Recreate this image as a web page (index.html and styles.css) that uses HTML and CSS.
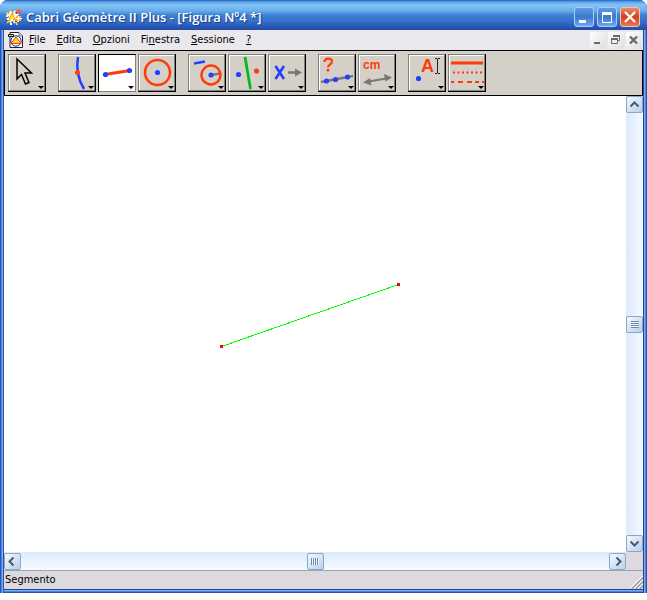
FILE: index.html
```html
<!DOCTYPE html>
<html lang="it">
<head>
<meta charset="utf-8">
<title>Cabri Géomètre II Plus</title>
<link rel="stylesheet" href="styles.css">
</head>
<body>
<div class="window">
  <header class="titlebar">
    <svg class="app-icon" width="17" height="18" viewBox="0 0 17 18" aria-hidden="true">
      <circle cx="7" cy="9" r="5.500" fill="#fff" stroke="#fff" stroke-width="2"/>
      <circle cx="7" cy="9" r="5.500" fill="none" stroke="#2433c8" stroke-width="2" stroke-dasharray="2 2"/>
      <path d="M3 12L6 5L10 12Z" fill="#ffe800" stroke="#ff8a20"/>
      <path d="M0 5l3 1M1 15l3-3M10 14l1 3M7 3l1 3" stroke="#ffe800" stroke-width="1.500" fill="none"/>
      <path d="M3 5h2M5 12h2M8 8h2M11 13h2M0 8h2M1 11h2M4 16h2" stroke="#fff" stroke-width="2"/>
      <path d="M13 1v5M10 3.500h6" stroke="#ff5a38" stroke-width="2"/>
      <path d="M10 8h5v5h-5z" fill="#ffb040"/><path d="M10 10.500h6M12.500 8v6" stroke="#fff"/>
    </svg>
    <h1 class="title">Cabri Géomètre II Plus - [Figura Nº4 *]</h1>
    <div class="captions">
      <button class="caption" aria-label="Riduci a icona"><svg width="18" height="18" viewBox="0 0 18 18"><path d="M4 13.500h7" stroke="#fff" stroke-width="3"/></svg></button>
      <button class="caption" aria-label="Ingrandisci"><svg width="18" height="18" viewBox="0 0 18 18"><path d="M4.500 4v10.500h9V4" fill="none" stroke="#fff"/><path d="M4 5.500h10" stroke="#fff" stroke-width="3"/></svg></button>
      <button class="caption close" aria-label="Chiudi"><svg width="18" height="18" viewBox="0 0 18 18"><path d="M4 4l10 10M14 4l-10 10" stroke="#fff" stroke-width="2.400"/></svg></button>
    </div>
  </header>
  <nav class="menubar">
    <svg class="doc-icon" width="16" height="16" viewBox="0 0 16 16" aria-hidden="true">
      <path d="M2 .5h9l3.500 3.500v11.500H2Z" fill="#fff" stroke="#222"/><path d="M11 .5V4h3.500" fill="#ddd" stroke="#777"/>
      <circle cx="8" cy="9" r="5.200" fill="#fff" stroke="#2020d8"/>
      <path d="M3 11.500L8 5L13 11.500Z" fill="#ffe800" stroke="#f03018"/>
      <path d="M.5 2.500h5v2h-5z" fill="#ffe800" stroke="#111"/>
    </svg>
    <button class="menu"><u>F</u>ile</button>
    <button class="menu"><u>E</u>dita</button>
    <button class="menu"><u>O</u>pzioni</button>
    <button class="menu">Fi<u>n</u>estra</button>
    <button class="menu"><u>S</u>essione</button>
    <button class="menu"><u>?</u></button>
    <div class="doc-buttons">
      <button aria-label="Riduci figura"><svg width="16" height="16" viewBox="0 0 16 16"><path d="M4 11h6" stroke="#6d6a60" stroke-width="2"/></svg></button>
      <button aria-label="Ripristina figura"><svg width="16" height="16" viewBox="0 0 16 16"><path d="M5.500 5V3.500h6v5H10M3.500 7v4.500h6V7" fill="none" stroke="#6d6a60"/><path d="M3 7h7M5 4h7" stroke="#6d6a60" stroke-width="2"/></svg></button>
      <button aria-label="Chiudi figura"><svg width="16" height="16" viewBox="0 0 16 16"><path d="M4 4.500l7 7M11 4.500l-7 7" stroke="#6d6a60" stroke-width="2.400"/></svg></button>
    </div>
  </nav>
  <div class="toolbar" role="toolbar" aria-label="Strumenti">
    <div class="group">
      <button class="tool" aria-label="Puntatore"><svg width="38" height="38" viewBox="0 0 38 38"><path d="M9 5V25L13.500 20.500L17.500 30L21 28.500L17 19H23.500Z" fill="none" stroke="#000" stroke-width="1.500"/><path class="drop" d="M30 32h6l-3 3z"/></svg></button>
    </div>
    <div class="group">
      <button class="tool" aria-label="Punti"><svg width="38" height="38" viewBox="0 0 38 38"><path d="M20 3C18 14 20 25 26 35" fill="none" stroke="#2440ff" stroke-width="2.500"/><circle cx="19.500" cy="18.500" r="2.500" fill="#ff3c08"/><path class="drop" d="M30 32h6l-3 3z"/></svg></button>
      <button class="tool active" aria-label="Segmento"><svg width="38" height="38" viewBox="0 0 38 38"><path d="M7 20.500L32 16.500" stroke="#ff3c08" stroke-width="3"/><g fill="#2440ff"><circle cx="7.500" cy="20.500" r="2.600"/><circle cx="31.500" cy="16.500" r="2.600"/></g><path class="drop" d="M30 32h6l-3 3z"/></svg></button>
      <button class="tool" aria-label="Circonferenza"><svg width="38" height="38" viewBox="0 0 38 38"><circle cx="19.500" cy="18.500" r="12.500" fill="none" stroke="#ff3c08" stroke-width="2.500"/><circle cx="19.500" cy="18.500" r="2.600" fill="#2440ff"/><path class="drop" d="M30 32h6l-3 3z"/></svg></button>
    </div>
    <div class="group">
      <button class="tool" aria-label="Costruzioni"><svg width="38" height="38" viewBox="0 0 38 38"><path d="M6 9.500L17 7.500" stroke="#2440ff" stroke-width="2.400"/><path d="M23 21L32 19.500" stroke="#777" stroke-width="2.500"/><circle cx="23" cy="21" r="9.500" fill="none" stroke="#ff3c08" stroke-width="2.400"/><circle cx="23" cy="21" r="2.600" fill="#2440ff"/><path class="drop" d="M30 32h6l-3 3z"/></svg></button>
      <button class="tool" aria-label="Trasformazioni"><svg width="38" height="38" viewBox="0 0 38 38"><path d="M17 3L22.500 35" stroke="#08b820" stroke-width="2.800"/><circle cx="10.500" cy="20.500" r="2.600" fill="#2440ff"/><circle cx="28.500" cy="17" r="2.600" fill="#ff3c08"/><path class="drop" d="M30 32h6l-3 3z"/></svg></button>
      <button class="tool" aria-label="Macro"><svg width="38" height="38" viewBox="0 0 38 38"><path d="M7.500 12L16 25M16 12L7.500 25" stroke="#2440ff" stroke-width="2.600"/><path d="M20 18.500h10" stroke="#777" stroke-width="2.500"/><path d="M27 14.500l7 4-7 4z" fill="#777"/><path class="drop" d="M30 32h6l-3 3z"/></svg></button>
    </div>
    <div class="group">
      <button class="tool" aria-label="Proprietà"><svg width="38" height="38" viewBox="0 0 38 38"><path d="M3 28L35 22" stroke="#777" stroke-width="2.500"/><g fill="#2440ff"><circle cx="8.500" cy="27" r="2.600"/><circle cx="17.500" cy="25.500" r="2.600"/><circle cx="29.500" cy="23" r="2.600"/></g><path d="M6.500 8C6.500 3.500 14 3.500 14 7.500C14 10.500 10 10.500 10 13.500" fill="none" stroke="#ff3c08" stroke-width="2.200"/><path d="M8.700 15h2.600v2.500H8.700z" fill="#ff3c08"/><path class="drop" d="M30 32h6l-3 3z"/></svg></button>
      <button class="tool" aria-label="Misura"><svg width="38" height="38" viewBox="0 0 38 38"><text class="cm" x="5" y="15">cm</text><path d="M8 28L31 24" stroke="#777" stroke-width="2"/><path d="M5 28.500l7-4.500 1.500 7.500zM34 23.500l-8-3.500 1.500 7.500z" fill="#777"/><path class="drop" d="M30 32h6l-3 3z"/></svg></button>
    </div>
    <div class="group">
      <button class="tool" aria-label="Testo e simboli"><svg width="38" height="38" viewBox="0 0 38 38"><text class="letter" x="13" y="18">A</text><path d="M27 4.500h2l.5 1 .5-1h2M29.500 5v14M27 19.500h2l.5-1 .5 1h2" fill="none" stroke="#222"/><circle cx="10.500" cy="24.500" r="2.600" fill="#2440ff"/><path class="drop" d="M30 32h6l-3 3z"/></svg></button>
      <button class="tool" aria-label="Attributi"><svg width="38" height="38" viewBox="0 0 38 38"><g stroke="#ff3c08" stroke-width="2"><path d="M3 9h32" stroke-width="3"/><path d="M5 18.500h31" stroke-dasharray="2 2.500"/><path d="M3 28h3M10 28h5M19 28h5M27 28h4M34 28h2"/></g><path class="drop" d="M30 32h6l-3 3z"/></svg></button>
    </div>
  </div>
  <main class="workspace">
    <div class="canvas">
      <svg class="figure" width="622" height="456" viewBox="0 0 622 456" role="img" aria-label="Segmento" shape-rendering="crispEdges"><path d="M217.500 250.500L394.500 188.500" stroke="#0f0"/><path d="M216 249h3v3h-3zM393 187h3v3h-3z" fill="#f00"/></svg>
    </div>
    <div class="scroll vertical">
      <button class="arrow" aria-label="Su"><svg width="15" height="15" viewBox="0 0 15 15"><path d="M3.500 9.500l4-4 4 4"/></svg></button>
      <button class="thumb" aria-label="Posizione verticale"></button>
      <button class="arrow" aria-label="Giù"><svg width="15" height="15" viewBox="0 0 15 15"><path d="M3.500 5.500l4 4 4-4"/></svg></button>
    </div>
    <div class="scroll horizontal">
      <button class="arrow" aria-label="Sinistra"><svg width="15" height="15" viewBox="0 0 15 15"><path d="M8.500 3.500l-4 4 4 4"/></svg></button>
      <button class="thumb" aria-label="Posizione orizzontale"></button>
      <button class="arrow" aria-label="Destra"><svg width="15" height="15" viewBox="0 0 15 15"><path d="M6.500 3.500l4 4-4 4"/></svg></button>
    </div>
  </main>
  <footer class="status"><span>Segmento</span>
    <svg width="13" height="13" viewBox="0 0 13 13" aria-hidden="true"><path d="M0 13L13 0M4 13L13 4M8 13L13 8" stroke="#fff" stroke-width="1.500"/><path d="M1.500 13L13 1.500M5.500 13L13 5.500M9.500 13L13 9.500" stroke="#99979c" stroke-width="1.500"/></svg>
  </footer>
</div>
</body>
</html>
```
FILE: styles.css
```css
* { box-sizing: border-box; }
body { margin: 0; background: #fff; font: 11px/14px "DejaVu Sans Condensed", "Liberation Sans", sans-serif; color: #000; }
button { margin: 0; padding: 0; border: 0; background: none; font: inherit; color: inherit; }
svg { display: block; flex: none; }

.window {
  display: flex; flex-direction: column;
  height: calc(100vh - 7px);
  padding: 0 4px 4px;
  border-radius: 8px 8px 0 0;
  background: linear-gradient(90deg, #2c52b5 0 1px, #4a86dc 1px 2px, #78aeea 2px 3px, #2a50b4 3px 4px, transparent 4px calc(100% - 4px), #2143a0 calc(100% - 4px) calc(100% - 3px), #78aeea calc(100% - 3px) calc(100% - 2px), #4a86dc calc(100% - 2px) calc(100% - 1px), #2c52b5 calc(100% - 1px)), linear-gradient(0deg, #2c52b5 0 1px, #4a86dc 1px 2px, #78aeea 2px 3px, #2143a0 3px);
}
.titlebar {
  display: flex; align-items: center; flex: none;
  height: 30px; margin: 0 -4px; padding: 3px 7px 0 6px;
  border-radius: 8px 8px 0 0;
  background: linear-gradient(#2a5fc0 0, #5aa6ea 2px, #84c4f6 5px, #66ade9 11px, #3b80d4 15px, #3473c9 21px, #2a55b5 27px, #2449a6 30px);
}
.title { flex: 1; margin: 0 0 0 3px; font: 600 13px/18px "Open Sans", "Noto Sans", sans-serif; color: #fff; text-shadow: 1px 1px 1px #153a85; white-space: nowrap; }
.captions { display: flex; gap: 3px; }
.caption { display: grid; place-items: center; width: 20px; height: 20px; border: 1px solid #a9cdf4; border-radius: 3px; background: linear-gradient(#5b9de5, #3f78cb 50%, #6ea7ea); }
.close { border-color: #f2c1b5; background: linear-gradient(#ec8c70, #d4401c 50%, #ee7650); }

.menubar { display: flex; align-items: center; flex: none; height: 20px; padding-left: 4px; background: #ebe8ed; }
.doc-icon { margin-right: 5px; }
.menu { margin-right: 11px; line-height: 18px; }
.doc-buttons { display: flex; gap: 2px; margin-left: auto; padding-right: 1px; }
.doc-buttons button { width: 16px; height: 17px; background: linear-gradient(135deg, #fff, #dedce2); }

.toolbar { display: flex; flex: none; gap: 12px; height: 46px; padding: 3px; border: 1px solid #000; background: #d4d0c8; overflow: hidden; }
.group { display: flex; gap: 2px; }
.tool { width: 38px; height: 38px; background: #d4d0c8; box-shadow: inset -1px -1px #000, inset 1px 1px #808080, inset -2px -2px #808080, inset 2px 2px #fff; }
.tool.active { background: #fff; box-shadow: inset 1px 1px #000, inset -1px -1px #808080; }
.drop { fill: #000; }
.cm { font: bold 12px "Liberation Sans", sans-serif; fill: #ff3c08; }
.letter { font: bold 18px "Liberation Sans", sans-serif; fill: #ff3c08; }

.workspace { display: grid; flex: 1; min-height: 0; grid-template: minmax(0, 1fr) 18px / minmax(0, 1fr) 17px; background: #dcd9df; }
.canvas { background: #fff; overflow: hidden; }
.scroll { display: flex; align-items: center; justify-content: space-between; }
.vertical { flex-direction: column; background: linear-gradient(90deg, #dceafc, #f6faff); }
.horizontal { background: linear-gradient(#dceafc, #f8fbff); }
.arrow, .thumb { display: grid; place-items: center; width: 17px; height: 17px; border: 1px solid #8ba7c4; border-radius: 2px; background: linear-gradient(135deg, #f4f9ff, #b8d0ec); }
.arrow path { fill: none; stroke: #4c5a70; stroke-width: 2; }
.thumb::before { content: ""; width: 8px; height: 7px; background: repeating-linear-gradient(#7189aa 0 1px, #eef5fd 1px 2px); }
.horizontal .thumb::before { background: repeating-linear-gradient(90deg, #7189aa 0 1px, #eef5fd 1px 2px); }

.status { display: flex; align-items: center; justify-content: space-between; flex: none; height: 19px; padding-left: 1px; border-top: 1px solid #a3a1a7; background: #dcd9df; }
.status svg { align-self: flex-end; }
```
